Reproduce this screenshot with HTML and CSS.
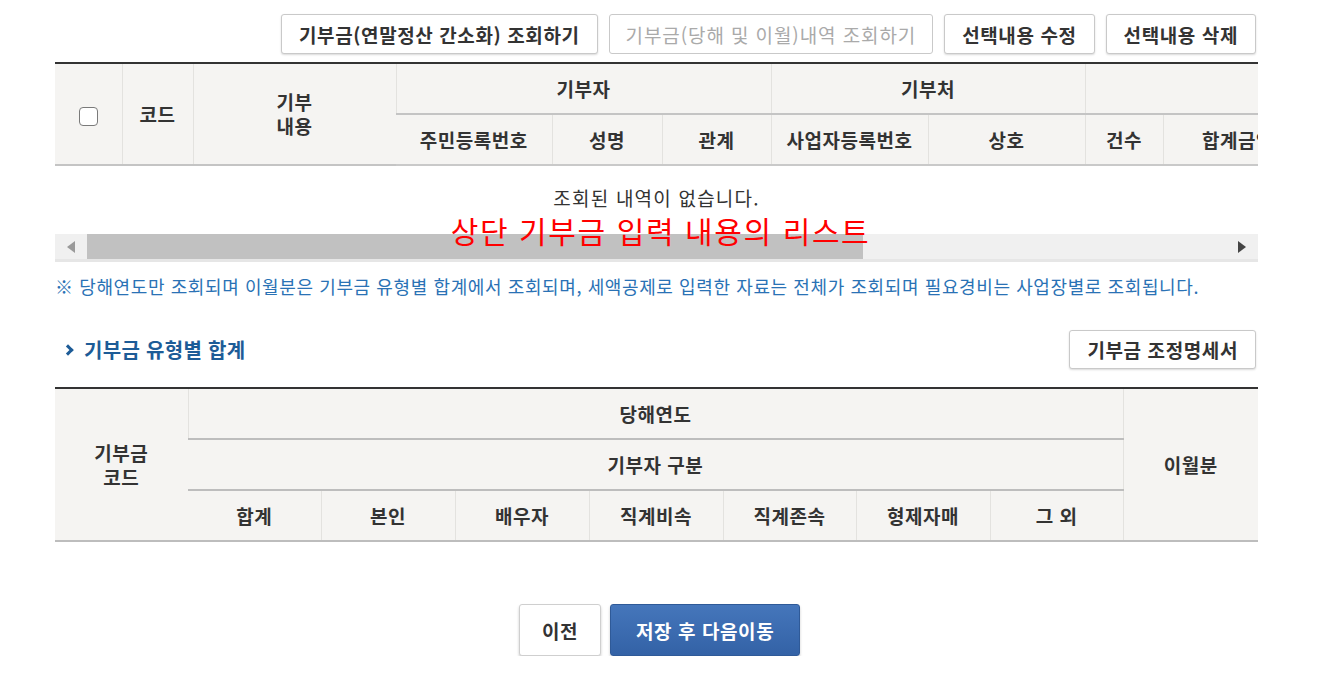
FILE: index.html
```html
<!DOCTYPE html>
<html lang="ko">
<head>
    <meta charset="UTF-8">
    <title>기부금 입력</title>
    <link rel="stylesheet" href="styles.css">
</head>
<body>
    <div class="page">
        <div class="top-buttons">
            <button class="btn">기부금(연말정산 간소화) 조회하기</button>
            <button class="btn disabled">기부금(당해 및 이월)내역 조회하기</button>
            <button class="btn">선택내용 수정</button>
            <button class="btn">선택내용 삭제</button>
        </div>

        <div class="list-box">
            <div class="scroll-area">
                <table class="grid list-table">
                    <colgroup>
                        <col style="width:67px">
                        <col style="width:71px">
                        <col style="width:203px">
                        <col style="width:156px">
                        <col style="width:110px">
                        <col style="width:109px">
                        <col style="width:157px">
                        <col style="width:157px">
                        <col style="width:78px">
                        <col style="width:150px">
                        <col style="width:150px">
                        <col style="width:150px">
                    </colgroup>
                    <thead>
                        <tr>
                            <th rowspan="2"><span class="check"></span></th>
                            <th rowspan="2">코드</th>
                            <th rowspan="2">기부<br>내용</th>
                            <th colspan="3">기부자</th>
                            <th colspan="2">기부처</th>
                            <th colspan="4">기부명세</th>
                        </tr>
                        <tr>
                            <th>주민등록번호</th>
                            <th>성명</th>
                            <th>관계</th>
                            <th>사업자등록번호</th>
                            <th>상호</th>
                            <th>건수</th>
                            <th>합계금액</th>
                            <th>공제대상금액</th>
                            <th>기부장려금</th>
                        </tr>
                    </thead>
                </table>
            </div>
            <div class="empty-msg">조회된 내역이 없습니다.</div>
            <div class="fake-scroll">
                <span class="arrow left"></span>
                <span class="thumb"></span>
                <span class="arrow right"></span>
            </div>
            <div class="memo">상단 기부금 입력 내용의 리스트</div>
        </div>

        <p class="note">※ 당해연도만 조회되며 이월분은 기부금 유형별 합계에서 조회되며, 세액공제로 입력한 자료는 전체가 조회되며 필요경비는 사업장별로 조회됩니다.</p>

        <div class="section-head">
            <h3 class="section-title"><span class="chev"></span>기부금 유형별 합계</h3>
            <button class="btn">기부금 조정명세서</button>
        </div>

        <table class="grid sum-table">
            <colgroup>
                <col style="width:133px">
                <col style="width:133px">
                <col style="width:134px">
                <col style="width:134px">
                <col style="width:134px">
                <col style="width:133px">
                <col style="width:134px">
                <col style="width:133px">
                <col style="width:135px">
            </colgroup>
            <thead>
                <tr>
                    <th rowspan="3">기부금<br>코드</th>
                    <th colspan="7">당해연도</th>
                    <th rowspan="3">이월분</th>
                </tr>
                <tr>
                    <th colspan="7">기부자 구분</th>
                </tr>
                <tr>
                    <th>합계</th>
                    <th>본인</th>
                    <th>배우자</th>
                    <th>직계비속</th>
                    <th>직계존속</th>
                    <th>형제자매</th>
                    <th>그 외</th>
                </tr>
            </thead>
        </table>

        <div class="bottom-buttons">
            <button class="btn big">이전</button>
            <button class="btn big primary">저장 후 다음이동</button>
        </div>
    </div>
</body>
</html>
```

FILE: styles.css
```css
body {
    margin: 0;
    background: #fff;
    font-family: "Noto Sans CJK KR", "Noto Sans", sans-serif;
    color: #333;
}
.page {
    width: 1203px;
    margin-left: 55px;
    padding-top: 14px;
}
.btn {
    height: 40px;
    padding: 0 17px;
    background: #fff;
    border: 1px solid #c9c9c9;
    border-radius: 3px;
    box-shadow: 0 1px 2px rgba(0, 0, 0, 0.15);
    font-family: inherit;
    font-size: 19px;
    letter-spacing: 0.6px;
    font-weight: bold;
    color: #333;
    white-space: nowrap;
}
.btn.disabled {
    color: #aaa;
    font-weight: normal;
    letter-spacing: 0.9px;
    padding: 0 16px;
    box-shadow: none;
}
.top-buttons {
    display: flex;
    justify-content: flex-end;
    gap: 11px;
    padding-right: 2px;
}
.list-box {
    position: relative;
    margin-top: 8px;
}
.scroll-area {
    overflow: hidden;
    border-top: 2px solid #333;
}
.grid {
    border-collapse: collapse;
    table-layout: fixed;
}
.grid th {
    background: #f5f4f2;
    border-left: 1px solid #e3e2df;
    border-bottom: 2px solid #bdbdbd;
    font-size: 19px;
    letter-spacing: 0.5px;
    font-weight: bold;
    color: #333;
    height: 49px;
    padding: 0;
    line-height: 24px;
    text-align: center;
    white-space: nowrap;
}
.grid tr th:first-child {
    border-left: none;
}
.list-table {
    width: 1558px;
}
.list-table tr:first-child th {
    border-bottom-color: #c4c4c4;
}
.list-table tr:last-child th {
    border-bottom-color: #c9c9c9;
}
.check {
    display: inline-block;
    width: 17px;
    height: 17px;
    border: 1.5px solid #7a7a7a;
    border-radius: 4px;
    background: #fff;
    vertical-align: middle;
}
.empty-msg {
    height: 68px;
    line-height: 64px;
    text-align: center;
    font-size: 19px;
    letter-spacing: 1.2px;
}
.fake-scroll {
    display: flex;
    align-items: center;
    height: 25px;
    background: #f0f0f0;
    border-bottom: 3px solid #e6e6e6;
}
.thumb {
    height: 100%;
    width: 776px;
    background: #c1c1c1;
    margin-left: 12px;
}
.arrow {
    width: 0;
    height: 0;
    border-top: 6px solid transparent;
    border-bottom: 6px solid transparent;
}
.arrow.left {
    border-right: 8px solid #9a9a9a;
    margin-left: 12px;
}
.arrow.right {
    border-left: 8px solid #444;
    margin-left: auto;
    margin-right: 12px;
}
.memo {
    position: absolute;
    left: 0;
    right: 0;
    top: 146px;
    text-align: center;
    color: #ff0000;
    font-size: 30px;
    letter-spacing: 1.6px;
    padding-left: 8px;
}
.note {
    margin: 11px 0 0;
    font-size: 18px;
    color: #2a72b5;
    letter-spacing: 0.6px;
    white-space: nowrap;
}
.section-head {
    display: flex;
    justify-content: space-between;
    align-items: center;
    margin-top: 31px;
}
.section-head .btn {
    height: 39px;
    margin-right: 2px;
}
.section-title {
    display: flex;
    align-items: center;
    margin: 0 0 0 9px;
    font-size: 20px;
    letter-spacing: 0.3px;
    font-weight: bold;
    color: #1d5c97;
}
.chev {
    display: inline-block;
    width: 5px;
    height: 5px;
    border-top: 3px solid #1d5c97;
    border-right: 3px solid #1d5c97;
    transform: rotate(45deg);
    margin-right: 12px;
}
.sum-table {
    width: 1203px;
    margin-top: 18px;
    border-top: 2px solid #333;
}
.sum-table th {
    border-bottom: 2px solid #bdbdbd;
}
.bottom-buttons {
    display: flex;
    justify-content: center;
    gap: 9px;
    margin-top: 62px;
    padding-left: 6px;
}
.btn.big {
    height: 52px;
    padding: 0 22px;
    border-color: #cfcfcf;
    box-shadow: 0 2px 3px rgba(0, 0, 0, 0.2);
}
.btn.primary {
    width: 190px;
    background: linear-gradient(#4576bb, #3362a6);
    border-color: #2f5a98;
    color: #fff;
}
```
